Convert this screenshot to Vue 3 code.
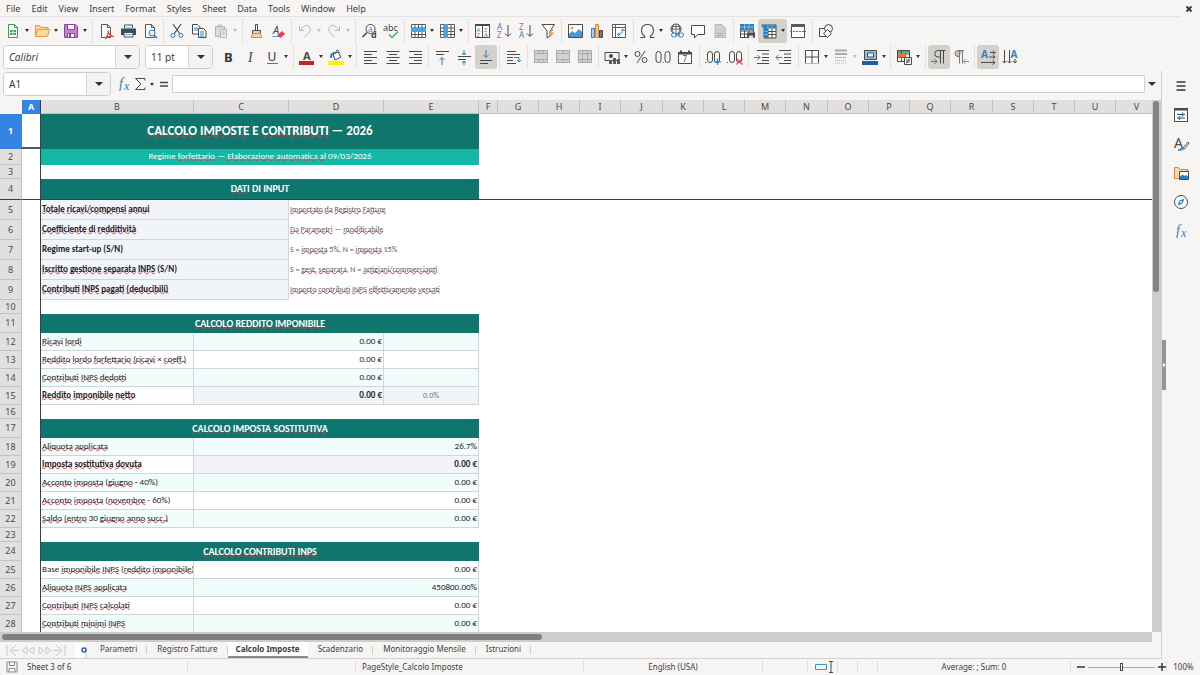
<script setup>
const menus = ['File', 'Edit', 'View', 'Insert', 'Format', 'Styles', 'Sheet', 'Data', 'Tools', 'Window', 'Help']

const page = (c) => `<path d="M3.5 1.5h6l3 3v10h-9z" fill="#fdfdfd" stroke="${c}"/><path d="M9.5 1.5v3h3" fill="none" stroke="${c}"/>`
const grid = '<path d="M1.5 1.5h14v13h-14zM1.5 5h14M1.5 8.5h14M1.5 11.5h14M5 1.5v13M8.500 1.5v13M12 1.500v13" fill="#fff" stroke="#4a4a48" stroke-width=".9"/>'
const tinyGrid = (extra) => `<path d="M1.500 1.500h13v12h-13z" fill="#d4d3d1" stroke="#aaa9a7"/><path d="${extra}" fill="none" stroke="#aaa9a7"/>`
const lines = (d) => `<path d="${d}" stroke="#4a4a48" fill="none"/>`
const letter = (t, x, y, size, fill, more = '') => `<text x="${x}" y="${y}" font-size="${size}" fill="${fill}" ${more}>${t}</text>`
const blue = '#2583c6'

const icons = {
  new: page('#3b9a55') + '<path d="M5 7h6v5H5z" fill="#3fa65b"/><path d="M5 9.500h6M8 7v5" stroke="#c9ecd1"/>',
  open: '<path d="M1.500 13.500v-11h4l1.500 2h7v3" fill="#fbd596" stroke="#e8963f"/><path d="M1.500 13.500l2-7h12l-2 7z" fill="#fcd99c" stroke="#e8963f"/>',
  save: '<path d="M1.500 1.500h11l2 2v11h-13z" fill="#c77fd4" stroke="#8e44a3"/><path d="M4.500 1.500h7v5h-7z" fill="#fff" stroke="#8e44a3"/><path d="M4.500 10.500h7v4h-7z" fill="#fff" stroke="#8e44a3"/><path d="M6 11h2v3H6z" fill="#8e44a3"/>',
  pdf: page('#5b5b59') + '<path d="M7 15.500c3-3 4-5 3-8 0 3 3 6 6 6-3-1-6 0-9 2" fill="none" stroke="#d43b3f" stroke-width="1.200"/>',
  print: '<path d="M4.500 6V2h8v4" fill="#fff" stroke="#4a4a48"/><path d="M1 5.500h15v6.500H1z" fill="#4a4a48"/><path d="M4 4.500h9v1.500H4z" fill="#5aa5dc"/><path d="M4 9.500h9v4.500H4z" fill="#fff" stroke="#4a4a48"/><path d="M5 11.500h7" stroke="#5aa5dc"/>',
  preview: page('#5b5b59') + '<circle cx="10" cy="10" r="3" fill="#e2f1fb" stroke="#2583c6"/><path d="M12 12l3 3" stroke="#2583c6" stroke-width="1.500"/>',
  cut: '<path d="M4 1l7 10M12 1L5 11" stroke="#4a4a48" stroke-width="1.200"/><circle cx="4" cy="12.500" r="2" fill="none" stroke="#2583c6"/><circle cx="12" cy="12.500" r="2" fill="none" stroke="#2583c6"/>',
  copy: '<path d="M1.500 1.500h5l2.500 2.500v7h-7.500z" fill="#fff" stroke="#4a4a48"/><path d="M3 5h4M3 7h4" stroke="#2583c6"/><path d="M7.500 5.500h5l2.500 2.500v6.500h-7.500z" fill="#fff" stroke="#4a4a48"/><path d="M9 9h4M9 11h4M9 13h4" stroke="#2583c6"/>',
  paste: '<path d="M2.500 3.500h9v10h-9z" fill="#dddcda" stroke="#b6b5b3"/><path d="M5 1.500h4v3H5z" fill="#c4c3c1"/><path d="M7.500 6.500h6v8h-6z" fill="#ecebe9" stroke="#b6b5b3"/><path d="M9 9h3M9 11h3" stroke="#b6b5b3"/>',
  brush: '<path d="M7.500 1.500h2v6h-2z" fill="#fff" stroke="#4a4a48"/><path d="M4.500 7.500h8v3h-8z" fill="#d5d4d2" stroke="#4a4a48"/><path d="M4.500 10.500h8l1 4h-10z" fill="#fbd596" stroke="#e8862f"/>',
  clear: letter('A', 3, 11, 11, '#4a4a48', 'font-style="italic"') + '<path d="M2 13.500h7" stroke="#5aa5dc"/><path d="M7 12.500l5-4.500 3 3-4.500 4z" fill="#e2444b"/>',
  undo: '<path d="M2.500 7.500L6 4a3.900 3.900 0 0 1 6.500 5L7.500 14M2.500 3v4.500H7" fill="none" stroke="#bcbbb9"/>',
  redo: '<path d="M13.500 7.500L10 4a3.900 3.900 0 0 0-6.500 5l5 5M13.500 3v4.500H9" fill="none" stroke="#bcbbb9"/>',
  find: '<circle cx="9.500" cy="6" r="4.500" fill="#fff" stroke="#4a4a48"/><path d="M6 9.500L1.500 14" stroke="#4a4a48" stroke-width="1.600"/>' + letter('a', 7, 8.5, 8, blue) + letter('d', 10, 15, 9, '#4a4a48', 'font-weight="bold"'),
  spell: letter('abc', 0, 8, 9, '#4a4a48') + '<path d="M6 11.500l3 3 6-6" fill="none" stroke="#3eb96b" stroke-width="1.500"/>',
  row: grid + '<path d="M1 5h15v4H1z" fill="#4aa3e0"/>',
  col: grid + '<path d="M5 1h4v14H5z" fill="#4aa3e0"/>',
  sort: '<path d="M1.500 1.500h14v13h-14zM8.500 1.500v13" fill="#fff" stroke="#4a4a48"/><path d="M1 1h15v2H1z" fill="#4a4a48"/>' + letter('A', 2.5, 8.500, 6, blue) + letter('Z', 2.5, 14, 6, '#b455c0') + letter('Z', 10, 8.500, 6, '#b455c0') + letter('A', 10, 14, 6, blue),
  az: letter('A', 1, 7, 8, blue) + letter('Z', 1, 15, 8, '#b455c0') + lines('M12 2v11M9 10.500l3 3 3-3'),
  za: letter('Z', 1, 7, 8, '#b455c0') + letter('A', 1, 15, 8, blue) + lines('M12 2v11M9 10.500l3 3 3-3'),
  filter: '<path d="M2 1.500h12.500L10 8v5l-3 2V8z" fill="#fff" stroke="#4a4a48"/><path d="M12 6l-4 5h3l-1.500 4L14.500 9.500h-3L14 6z" fill="#f5a34b"/>',
  image: '<path d="M1.500 1.500h14v13h-14z" fill="#fff" stroke="#4a4a48"/><path d="M2 14v-3l3-3 3 2 4-4 3 3v5z" fill="#4a98d3"/><circle cx="5" cy="5" r="1.500" fill="#f2a040"/>',
  chart: '<path d="M2.500 5.500h3v9h-3z" fill="#a7d0f0" stroke="#2583c6"/><path d="M6.500 1.500h3v13h-3z" fill="#fbc277" stroke="#e8862f"/><path d="M10.500 7.500h3v7h-3z" fill="#77767b" stroke="#4a4a48"/>',
  pivot: '<path d="M1.500 1.500h13v13h-13zM1.500 4.500h13M4.500 1.500v13" fill="#fff" stroke="#5b5b59"/><path d="M6.500 11.500c4 0 5.500-2 5.500-5.500M10 8l2-2 2 2M8.500 9.500l-2 2 2 2" fill="none" stroke="#2583c6"/>',
  omega: '<path d="M1.500 14.500h4v-1.500C1 10 1.500 1.500 8.500 1.500s7.500 8.500 3 11.500v1.500h4" fill="none" stroke="#4a4a48" stroke-width="1.100"/>',
  link: '<circle cx="8" cy="6" r="5" fill="#fff" stroke="#4a4a48"/><path d="M3 6h10M8 1v10M4 3.500h8M5.500 2c-1.500 3-1.500 5 0 8M10.500 2c1.500 3 1.500 5 0 8" fill="none" stroke="#4a4a48" stroke-width=".8"/><rect x="3.500" y="10" width="5" height="4" rx="2" fill="#f6f5f4" stroke="#2583c6"/><rect x="10.500" y="10" width="5" height="4" rx="2" fill="#f6f5f4" stroke="#2583c6"/><path d="M7 12h5" stroke="#2583c6"/>',
  comment: '<path d="M1.500 2.500h13v9h-7l-3 3.500v-3.500h-3z" fill="#fff" stroke="#4a4a48"/>',
  header: '<path d="M3 1.500h7l3.500 3.500v9.500H3z" fill="#cfcecc" stroke="#bab9b7"/><path d="M5 10.500h6M5 12.500h6" stroke="#b0afad"/>',
  area: '<path d="M1.500 1.500h13v13h-13zM1.500 8h13M1.500 11h13M5.500 1.500v13M10 1.500v13" fill="#fff" stroke="#4a4a48"/><path d="M1 1h14v6H1z" fill="#2583c6"/><path d="M1 4h14M5.500 1v6M10 1v6" stroke="#9bc9ea" stroke-width=".8"/><path d="M8 9.500h8v5H8z" fill="#4a4a48"/><path d="M10 12.500h4v3h-4z" fill="#cfe6f6"/>',
  freeze: '<path d="M3 2h12v13H3zM3 8.500h12M3 11.500h12M7 2v13M11 2v13" fill="#fff" stroke="#4a4a48"/><path d="M3 2h12v3.500H7V15H3z" fill="#2583c6"/><path d="M3 8.500h4M3 11.500h4M7 2v4M11 2v3.500" stroke="#9bc9ea" stroke-width=".7"/><path d="M0 3h4M2 1v4M1 1l3 3" stroke="#2583c6"/>',
  split: '<path d="M1.500 1.500h13v13h-13z" fill="#fff" stroke="#4a4a48"/><path d="M1 1h14v3H1z" fill="#5b5b59"/><path d="M0 8.500h16" stroke="#2583c6" stroke-dasharray="2 1"/>',
  shapes: '<path d="M1.500 5.500h7v8h-7z" fill="none" stroke="#4a4a48"/><circle cx="10.500" cy="5.500" r="4" fill="#f6f5f4" stroke="#4a4a48"/><path d="M9.500 6.500l4 4-4 4-4-4z" fill="#f6f5f4" stroke="#4a4a48"/>',
  bold: letter('B', 4, 13, 13, '#363634', 'font-weight="bold"'),
  italic: letter('I', 6, 13, 14, '#4a4a48', 'font-style="italic" font-family="Liberation Serif"'),
  underline: letter('U', 3.5, 11.5, 12, '#363634') + '<path d="M3 14.500h11" stroke="#2583c6"/>',
  fontcolor: letter('A', 4, 10.500, 11, '#4a4a48', 'font-weight="bold"') + '<path d="M0 12h15v4H0z" fill="#c9211e"/>',
  highlight: '<path d="M5 5l5-2 3 5-6 3z" fill="#fff" stroke="#4a4a48"/><path d="M8 4c0-4 3-4 3 0" fill="none" stroke="#4a4a48"/><path d="M3 9c0-4 1-5 5-5" fill="none" stroke="#2583c6" stroke-width="2"/><path d="M0 12h16v4H0z" fill="#fff200"/>',
  left: lines('M2 2.500h13M2 5.500h8M2 8.500h13M2 11.500h8M2 14.500h13'),
  center: lines('M2.500 2.500h13M5 5.500h8M2.500 8.500h13M5 11.500h8M2.500 14.500h13'),
  right: lines('M3 2.500h13M8 5.500h8M3 8.500h13M8 11.500h8M3 14.500h13'),
  top: lines('M2 2.500h13M2 5.500h8') + '<path d="M8 16V8.500M5.500 11L8 8.500l2.500 2.500" fill="none" stroke="#2583c6"/>',
  middle: lines('M2 7.500h13M2 10.500h8') + '<path d="M8 1v5M6 4l2 2 2-2M8 16v-4M6 14l2-2 2 2" fill="none" stroke="#2583c6"/>',
  bottom: lines('M2 11.500h12M2 14.500h8') + '<path d="M8 1v7M5.500 6L8 8.500 10.500 6" fill="none" stroke="#2583c6"/>',
  wrap: lines('M2 2.500h9M2 5.500h13M2 8.500h6M2 11.500h6M2 14.500h9') + '<path d="M9 8.500h5v4M12 11l2 2 2-2" fill="none" stroke="#2583c6"/>',
  merge: tinyGrid('M1.500 4.500h13M1.500 10.500h13M6 1.500v3M10 1.500v3M6 10.500v3M10 10.500v3'),
  mergecells: tinyGrid('M1.500 4.500h13M1.500 10.500h13M8 1.500v3M8 10.500v3'),
  unmerge: tinyGrid('M1.500 4.500h13M1.500 10.500h13M5.500 1.500v12M10.500 1.500v12'),
  currency: '<path d="M1 3.500h14v8H1z" fill="#f6f5f4" stroke="#4a4a48"/><circle cx="7" cy="7" r="2" fill="#4a4a48"/><path d="M5 11h3v4H5zM9 9h3v6H9zM13 10h3v5h-3z" fill="#5b5b59"/>',
  percent: '<circle cx="4.500" cy="5" r="2.500" fill="none" stroke="#4a4a48"/><circle cx="11.500" cy="11" r="2.500" fill="none" stroke="#4a4a48"/><path d="M12 2L4 14" stroke="#4a4a48"/>',
  number: '<rect x="1" y="2.500" width="5" height="11" rx="2.500" fill="none" stroke="#4a4a48"/><rect x="10" y="2.500" width="5" height="11" rx="2.500" fill="none" stroke="#4a4a48"/><path d="M7.500 13.500h1" stroke="#4a4a48"/>',
  date: '<path d="M1.500 3.500h13v11h-13z" fill="#fff" stroke="#4a4a48"/><path d="M1 3h14v2.500H1zM3 1.500h2V4H3zM11 1.500h2V4h-2z" fill="#4a4a48"/>' + letter('7', 5.5, 13, 8, '#4a4a48'),
  adddec: '<path d="M0 13.500h1" stroke="#4a4a48"/><rect x="2.500" y="2.500" width="5" height="11" rx="2.500" fill="none" stroke="#4a4a48"/><rect x="9.500" y="2.500" width="5" height="11" rx="2.500" fill="none" stroke="#4a4a48"/><path d="M9 13h7M12.500 9.500v6.500" stroke="#2583c6" stroke-width="1.200"/>',
  deldec: '<path d="M0 13.500h1" stroke="#4a4a48"/><rect x="2.500" y="2.500" width="5" height="11" rx="2.500" fill="none" stroke="#4a4a48"/><rect x="9.500" y="2.500" width="5" height="11" rx="2.500" fill="none" stroke="#4a4a48"/><path d="M9.500 9.500l6 6M15.500 9.500l-6 6" stroke="#e2444b" stroke-width="1.200"/>',
  indent: lines('M3 1.500h12M8 5h7M8 8.500h7M8 11.500h7M3 14.500h12') + '<path d="M0 8.500h6M3.500 6L6 8.500 3.500 11" fill="none" stroke="#2583c6"/>',
  outdent: lines('M3 1.500h12M8 5h7M8 8.500h7M8 11.500h7M3 14.500h12') + '<path d="M0 8.500h6M2.500 6L0 8.500 2.500 11" fill="none" stroke="#2583c6"/>',
  borders: '<path d="M1.500 1.500h13v13h-13zM8 1.500v13M1.500 8h13" fill="#fff" stroke="#4a4a48"/><path d="M1 14.500h14" stroke="#e8b04a"/>',
  linestyle: '<path d="M2 1.500h12M2 5h12" stroke="#aaa9a7" stroke-width="2"/><path d="M2 8.500h12" stroke="#aaa9a7" stroke-dasharray="3 1"/><path d="M2 11.500h12M2 14h12" stroke="#aaa9a7" stroke-dasharray="1 1"/>',
  bordercolor: '<path d="M2.500 1.500h12v9h-12z" fill="#8cc1ec" stroke="#4a4a48"/><path d="M5.500 4h6v4h-6z" fill="#f6f5f4" stroke="#4a4a48"/><path d="M0 12h16v4H0z" fill="#1f5fa0"/>',
  conditional: '<path d="M1.500 1.500h12v11h-12zM1.500 5h12M1.500 8.500h12M5.500 1.500v11M9.500 1.500v11" fill="#fff" stroke="#4a4a48"/><path d="M2 2h3v3H2zM6 2h7v2H6z" fill="#57b36d"/><path d="M2 5h8v3.500H2z" fill="#ee6c4d"/><path d="M8.500 8.500h7v7h-7z" fill="#fff" stroke="#4a4a48"/><path d="M10 11h4M10 13h4M13.500 9.500l-3 5" stroke="#4a4a48" stroke-width=".9"/>',
  ltr: '<path d="M14.500 1.500H7a3 3 0 0 0 0 6.500h2M9.500 1.500v13M12.500 1.500v13" fill="none" stroke="#4a4a48"/><path d="M0 12.500h6M3.500 10L6 12.500 3.500 15" fill="none" stroke="#2583c6"/>',
  rtl: '<path d="M11 1.500H5a3 3 0 0 0 0 6h1" fill="#c4c3c1" stroke="#777"/><path d="M6.500 1.500v13M9.500 1.500v13" fill="none" stroke="#777"/><path d="M10 12.500h6M12.500 10L10 12.500l2.500 2.500" fill="none" stroke="#5aa5dc"/>',
  horiz: letter('A', 1, 9, 10, blue, 'font-weight="bold"') + lines('M10 3.500h5M13 1.500l2 2-2 2M9 8h6M13 6l2 2-2 2M1 13.500h14M12.500 11.500l2.500 2-2.500 2'),
  vert: letter('A', 8.5, 9, 10, blue, 'font-weight="bold"') + lines('M2.500 1v13M.5 12l2 2 2-2M7.500 1v13M5.500 12l2 2 2-2M13 10v4M11 12l2 2 2-2'),
  fx: letter('f', 3, 12, 14, blue, 'font-style="italic" font-family="Liberation Serif"') + letter('x', 8, 14, 12, blue, 'font-style="italic" font-family="Liberation Serif"'),
  sigma: '<path d="M13 4.500V2.500H3.500L9 8l-5.500 5.500H13v-2" fill="none" stroke="#4a4a48"/>',
  equals: '<path d="M4 6.500h8M4 10h8" stroke="#4a4a48" stroke-width="1.400"/>',
  burger: '<path d="M3.500 4h9M3.500 8h9M3.500 12h9" stroke="#363634" stroke-width="1.500"/>',
  props: '<path d="M1.500 1.500h13v13h-13z" fill="#fff" stroke="#4a4a48"/><path d="M1 1h14v2.500H1z" fill="#4a4a48"/><path d="M4 7.500h8M4 11h8" stroke="#4a4a48"/><path d="M9.500 5.500v4M6.500 9v4" stroke="#2583c6" stroke-width="1.500" fill="none"/>',
  styles: letter('A', 1, 12, 14, '#4a4a48') + '<path d="M15 6l-5 6 1.500 1L16 7z" fill="#fff" stroke="#4a4a48" stroke-width=".9"/><path d="M5 14c2 0 3-3 5-2.500S11 15 5 14" fill="#5aa5dc" stroke="#2583c6"/>',
  gallery: '<path d="M1.500 13.500v-11h4l1.500 2h8v9z" fill="#fbd9b0" stroke="#e8862f"/><path d="M6.500 6.500h9v8h-9z" fill="#fff" stroke="#4a4a48"/><path d="M7 14v-2.500l2.500-2 2 1.500 1.500-1 2 1.500V14z" fill="#2583c6"/>',
  navigator: '<circle cx="8" cy="8" r="6.500" fill="#fff" stroke="#4a4a48"/><path d="M11.500 4.500l-2 5-5 2 2-5z" fill="#2583c6"/><circle cx="8" cy="8" r="1" fill="#fff"/>',
}

const b = (icon, label, o = {}) => ({ icon, label, ...o })
const arrow = { arrow: true }
const dim = { arrow: true, dim: true }
const standardBar = [
  [b('new', 'New', arrow), b('open', 'Open', arrow), b('save', 'Save', arrow)],
  [b('pdf', 'Export as PDF'), b('print', 'Print'), b('preview', 'Print Preview')],
  [b('cut', 'Cut'), b('copy', 'Copy'), b('paste', 'Paste', dim)],
  [b('brush', 'Clone Formatting'), b('clear', 'Clear Formatting')],
  [b('undo', 'Undo', dim), b('redo', 'Redo', dim)],
  [b('find', 'Find and Replace'), b('spell', 'Spelling')],
  [b('row', 'Row', arrow), b('col', 'Column', arrow)],
  [b('sort', 'Sort'), b('az', 'Sort Ascending'), b('za', 'Sort Descending'), b('filter', 'AutoFilter')],
  [b('image', 'Image'), b('chart', 'Chart'), b('pivot', 'Pivot Table')],
  [b('omega', 'Symbol', arrow), b('link', 'Hyperlink'), b('comment', 'Comment'), b('header', 'Headers and Footers')],
  [b('area', 'Print Area'), b('freeze', 'Freeze Rows and Columns', { arrow: true, on: true }), b('split', 'Split Window')],
  [b('shapes', 'Draw Functions')],
]
const formatBar = [
  [b('bold', 'Bold'), b('italic', 'Italic'), b('underline', 'Underline', arrow)],
  [b('fontcolor', 'Font Color', arrow), b('highlight', 'Background Color', arrow)],
  [b('left', 'Align Left'), b('center', 'Center'), b('right', 'Align Right')],
  [b('top', 'Align Top'), b('middle', 'Center Vertically'), b('bottom', 'Align Bottom', { on: true })],
  [b('wrap', 'Wrap Text')],
  [b('merge', 'Merge and Center'), b('mergecells', 'Merge Cells'), b('unmerge', 'Unmerge Cells')],
  [b('currency', 'Currency', arrow), b('percent', 'Percent'), b('number', 'Number'), b('date', 'Date')],
  [b('adddec', 'Add Decimal Place'), b('deldec', 'Delete Decimal Place')],
  [b('indent', 'Increase Indent'), b('outdent', 'Decrease Indent')],
  [b('borders', 'Borders', arrow), b('linestyle', 'Border Style', dim), b('bordercolor', 'Border Color', arrow)],
  [b('conditional', 'Conditional Formatting', arrow)],
  [b('ltr', 'Left-To-Right', { on: true }), b('rtl', 'Right-To-Left')],
  [b('horiz', 'Text Direction Horizontal', { on: true }), b('vert', 'Text Direction Vertical')],
]
const sidebar = [b('burger', 'Sidebar Settings'), b('props', 'Properties'), b('styles', 'Styles'), b('gallery', 'Gallery'), b('navigator', 'Navigator'), b('fx', 'Functions')]

const columns = 'ABCDEFGHIJKLMNOPQRSTUV'.split('')
const colWidth = (name, i) => ({ A: 19, B: 153, C: 95, D: 95, E: 95, F: 19 })[name] ?? (i % 4 === 1 ? 42 : 41)

// Words between backticks carry the spelling mark.
const parts = (s) => s.split('`').map((text, i) => ({ text, bad: i % 2 === 1 })).filter((p) => p.text)
const gap = { kind: 'gap', cells: [] }
const title = (text, cls = 'section') => ({ kind: cls, cells: [{ text, span: 4, cls }] })
const input = (label, note) => ({ kind: 'input', cells: [{ text: label, span: 2, cls: 'label box soft strong' }, { text: note, span: 2, cls: 'note' }] })
const value = (label, val, tone = '', total = false) => ({
  kind: 'value',
  cells: [
    { text: label, span: 1, cls: `label box ${total ? 'strong' : tone}` },
    { text: val, span: 3, cls: `num box ${total ? 'soft strong' : tone}` },
  ],
})
const taxable = (label, tone, total = false) => ({
  kind: 'value',
  cells: [
    { text: label, span: 1, cls: `label box ${total ? 'strong' : tone}` },
    { text: '0.00 €', span: 2, cls: `num box ${total ? 'soft strong' : tone}` },
    { text: total ? '0.0%' : '', span: 1, cls: `pct box ${total ? 'soft' : tone}` },
  ],
})
const rows = [
  title('`CALCOLO` `IMPOSTE` E `CONTRIBUTI` — 2026', 'title'),
  title('Regime `forfettario` — `Elaborazione` `automatica` `al` 09/03/2026', 'subtitle'),
  gap,
  title('`DATI` DI INPUT'),
  input('`Totale` `ricavi/compensi` `annui`', '`Importato` `da` `Registro` `Fatture`'),
  input('`Coefficiente` `di` `redditività`', '`Da` `Parametri` — `modificabile`'),
  input('Regime start-up (S/N)', 'S = `imposta` 5%, N = `imposta` 15%'),
  input('`Iscritto` `gestione` `separata` `INPS` (S/N)', 'S = `gest.` `separata`, N = `artigiani/commercianti`'),
  input('`Contributi` `INPS` `pagati` `(deducibili)`', '`Importo` `contributi` `INPS` `effettivamente` `versati`'),
  gap,
  title('`CALCOLO` `REDDITO` `IMPONIBILE`'),
  taxable('`Ricavi` `lordi`', 'tint'),
  taxable('`Reddito` `lordo` `forfettario` `(ricavi` × `coeff.)`', ''),
  taxable('`Contributi` `INPS` `dedotti`', 'tint'),
  taxable('`Reddito` `imponibile` `netto`', '', true),
  gap,
  title('`CALCOLO` `IMPOSTA` `SOSTITUTIVA`'),
  value('`Aliquota` `applicata`', '26.7%', 'tint'),
  value('`Imposta` `sostitutiva` `dovuta`', '0.00 €', '', true),
  value('`Acconto` `imposta` (`giugno` - 40%)', '0.00 €', 'tint'),
  value('`Acconto` `imposta` (`novembre` - 60%)', '0.00 €'),
  value('`Saldo` `(entro` 30 `giugno` `anno` `succ.)`', '0.00 €', 'tint'),
  gap,
  title('`CALCOLO` `CONTRIBUTI` `INPS`'),
  value('Base `imponibile` `INPS` (`reddito` `imponibile)`', '0.00 €'),
  value('`Aliquota` `INPS` `applicata`', '450800.00%', 'tint'),
  value('`Contributi` `INPS` `calcolati`', '0.00 €'),
  value('`Contributi` `minimi` `INPS`', '0.00 €', 'tint'),
].map((r, i) => ({ ...r, n: i + 1 }))

const tabs = ['Parametri', 'Registro Fatture', 'Calcolo Imposte', 'Scadenzario', 'Monitoraggio Mensile', 'Istruzioni']
</script>

<template>
  <div class="app">
    <nav class="menubar">
      <div class="menus"><button v-for="m in menus" :key="m">{{ m }}</button></div>
      <button class="close" aria-label="Close document"><svg viewBox="0 0 8 8"><path d="M1.500 1.500l5 5M6.500 1.500l-5 5" stroke="#2e3436" stroke-width="1.800" /></svg></button>
    </nav>

    <div class="toolbar">
      <div v-for="(g, gi) in standardBar" :key="gi" class="group">
        <button v-for="t in g" :key="t.icon" :class="{ on: t.on, dim: t.dim }" :aria-label="t.label">
          <svg class="icon" viewBox="0 0 16 16" v-html="icons[t.icon]" />
          <i v-if="t.arrow" class="caret" />
        </button>
      </div>
    </div>

    <div class="toolbar format">
      <div class="combo font"><input value="Calibri" aria-label="Font Name"><button aria-label="Show fonts"><i class="caret big" /></button></div>
      <div class="combo size"><input value="11 pt" aria-label="Font Size"><button aria-label="Show sizes"><i class="caret big" /></button></div>
      <div v-for="(g, gi) in formatBar" :key="gi" class="group">
        <button v-for="t in g" :key="t.icon" :class="{ on: t.on, dim: t.dim }" :aria-label="t.label">
          <svg class="icon" viewBox="0 0 16 16" v-html="icons[t.icon]" />
          <i v-if="t.arrow" class="caret" />
        </button>
      </div>
    </div>

    <div class="work">
      <main class="document">
        <div class="formula">
          <div class="combo name"><input value="A1" aria-label="Name Box"><button aria-label="Show names"><i class="caret big" /></button></div>
          <div class="functions">
            <button aria-label="Function Wizard"><svg class="icon" viewBox="0 0 16 16" v-html="icons.fx" /></button>
            <button aria-label="Select Function"><svg class="icon" viewBox="0 0 16 16" v-html="icons.sigma" /><i class="caret" /></button>
            <button aria-label="Formula"><svg class="icon" viewBox="0 0 16 16" v-html="icons.equals" /></button>
          </div>
          <input class="line" aria-label="Input line">
          <button class="expand" aria-label="Expand Formula Bar"><i class="caret big" /></button>
        </div>

        <div class="sheet">
          <div class="cells">
            <table>
              <colgroup>
                <col class="numbers">
                <col v-for="(c, i) in columns" :key="c" :style="{ width: colWidth(c, i) + 'px' }">
              </colgroup>
              <thead>
                <tr><td class="corner" /><th v-for="c in columns" :key="c" scope="col" :class="{ picked: c === 'A', edge: c === 'A' }">{{ c }}</th></tr>
              </thead>
              <tbody>
                <tr v-for="r in rows" :key="r.n" :class="[r.kind + '-row', { frozen: r.n === 4 }]">
                  <th scope="row" :class="{ picked: r.n === 1 }">{{ r.n }}</th>
                  <td class="edge" :class="{ cursor: r.n === 1 }" />
                  <td v-for="(c, ci) in r.cells" :key="ci" :colspan="c.span" :class="c.cls">
                    <span v-for="(p, pi) in parts(c.text)" :key="pi" :class="{ bad: p.bad }">{{ p.text }}</span>
                  </td>
                  <td :colspan="r.cells.length ? 17 : 21" />
                </tr>
              </tbody>
            </table>
          </div>
          <div class="vscroll"><div class="thumb" /></div>
        </div>
        <div class="hscroll"><div class="thumb" /></div>

        <div class="tabs">
          <svg class="tabnav" viewBox="0 0 60 12" fill="none" stroke="#c9c8c6"><path d="M1 1v11M10 1L4 6.500l6 5.500M6 6.500h7M21 3l-5 3.500 5 3.500zM28 3l-5 3.500 5 3.500zM33 3l5 3.500-5 3.500zM40 3l5 3.500-5 3.500zM50 1l6 5.500-6 5.500M47 6.500h7M59 1v11" /></svg>
          <button class="add" aria-label="Add Sheet"><svg viewBox="0 0 16 16"><path d="M1 1h8l3 3v12H1z" fill="#fff" /><path d="M12 5v13" stroke="#c9c8c6" /><circle cx="10" cy="8" r="2" fill="#fff" stroke="#2a62b8" stroke-width="1.500" /></svg></button>
          <button v-for="t in tabs" :key="t" class="tab" :class="{ active: t === 'Calcolo Imposte' }">{{ t }}</button>
        </div>
      </main>

      <div class="splitter"><button aria-label="Hide sidebar"><i /></button></div>
      <aside class="sidebar">
        <button v-for="s in sidebar" :key="s.icon" :aria-label="s.label"><svg class="icon" viewBox="0 0 16 16" v-html="icons[s.icon]" /></button>
      </aside>
    </div>

    <footer class="status">
      <div class="count">
        <svg viewBox="0 0 12 12" fill="none" stroke="#8d8c8a"><path d="M1 1h10v10H1zM3.500 1v3.500h5V1M3 11V7.500h6V11" /></svg>
        <span>Sheet 3 of 6</span>
      </div>
      <div />
      <div class="style">PageStyle_Calcolo Imposte</div>
      <div class="middle">English (USA)</div>
      <div />
      <div class="mode"><svg viewBox="0 0 18 12" fill="none"><path d="M.5 3.500h11v5H.5z" stroke="#3a96cf" /><path d="M14 .5h4M16 .5v11M14 11.500h4" stroke="#4a4a48" /></svg></div>
      <div /><div />
      <div class="middle">Average: ; Sum: 0</div>
      <div class="zoom">
        <button aria-label="Zoom out"><svg viewBox="0 0 8 8"><path d="M0 4h8" stroke="#2e3436" stroke-width="1.500" /></svg></button>
        <input type="range" min="0" max="100" value="50" aria-label="Zoom">
        <button aria-label="Zoom in"><svg viewBox="0 0 8 8"><path d="M0 4h8M4 0v8" stroke="#2e3436" stroke-width="1.500" /></svg></button>
      </div>
      <div class="middle last">100%</div>
    </footer>
  </div>
</template>

<style>
body { margin: 0; }
</style>

<style scoped>
.app { display: flex; flex-direction: column; height: 100vh; background: #f6f5f4; color: #3d3d3b; font: 9px/12px "Noto Sans", "Open Sans", sans-serif; overflow: hidden; }
.app * { box-sizing: border-box; }
button { display: flex; align-items: center; justify-content: center; margin: 0; padding: 0; border: 0; background: none; color: inherit; font: inherit; }
input { min-width: 0; margin: 0; font: inherit; color: inherit; }
.icon { flex: none; width: 16px; height: 16px; overflow: visible; font-family: "Noto Sans", sans-serif; }
.caret { flex: none; width: 0; border: 2px solid transparent; border-top: 3px solid #2e3436; border-bottom: 0; }
.caret.big { border-width: 4px 4px 0; }
.dim .caret { border-top-color: #bcbbb9; }

.menubar { display: flex; justify-content: space-between; align-items: center; flex: none; height: 17px; }
.menus { display: flex; flex: 1; height: 17px; padding: 1px 0 0 6px; gap: 11px; border-bottom: 1px solid #e4e3e1; }
.close { width: 16px; margin-right: 3px; }
.close svg { width: 8px; height: 8px; }

.toolbar { display: flex; align-items: center; flex: none; height: 27px; padding-left: 2px; }
.toolbar.format { padding: 0 0 2px 3px; }
.group { display: flex; }
.group:not(:last-child) { margin-right: 2px; padding-right: 3px; border-right: 1px solid #e2e1df; }
.group:nth-child(even):not(:last-child) { padding-right: 2px; }
.group button { height: 24px; padding: 0 3px; border-radius: 3px; }
.group .caret { margin-right: -1px; margin-left: 4px; }
.group button.on { background: #d4d1cd; }

.combo { display: flex; flex: none; height: 24px; border: 1px solid #cfcdca; border-radius: 4px; background: #fff; overflow: hidden; font-size: 10px; }
.combo input { flex: 1; padding: 0 5px; border: 0; background: #fff; }
.combo button { width: 24px; border-left: 1px solid #d9d7d4; background: #f4f3f1; }
.font { width: 137px; margin-right: 5px; font-style: italic; }
.size { width: 68px; margin-right: 4px; }
.name { width: 108px; }

.work { display: flex; flex: 1; min-height: 0; }
.document { display: flex; flex-direction: column; flex: 1; min-width: 0; }
.formula { display: flex; align-items: center; flex: none; height: 29px; padding: 0 3px 3px; }
.functions { display: flex; margin-left: 5px; }
.functions .caret { margin: 0 2px; }
.line { flex: 1; height: 18px; border: 1px solid #d4d2cf; background: #fff; }
.expand { width: 13px; }

.sheet { display: flex; flex: 1; min-height: 0; background: #fff; }
.cells { flex: 1; min-width: 0; overflow: hidden; }
table { width: 1158px; table-layout: fixed; border-collapse: separate; border-spacing: 0; font: 9px/12px Carlito, Lato, sans-serif; }
.numbers { width: 22px; }
th, td { height: 18px; padding: 0; overflow: hidden; white-space: nowrap; }
th { border-right: 1px solid #c3c2c0; border-bottom: 1px solid #c3c2c0; background: #e1e0de; color: #4a4a48; font: 9px/12px "Noto Sans", sans-serif; }
thead th, .corner { height: 14px; }
.corner { background: #f6f5f4; }
.picked { border-color: #3584e4; background: #3584e4; color: #fff; font-weight: 700; }
.edge { border-right: 1px solid #3d3d44; }
.cursor { border-bottom: 2px solid #4c5a5a; }
.title-row > * { height: 35px; }
.subtitle-row > * { height: 16px; }
.gap-row > * { height: 14px; }
.section-row > * { height: 19px; }
.input-row > * { height: 20px; }
.frozen > * { height: 21px; border-bottom: 1px solid #3d3d44; }
.title, .subtitle, .section { color: #fff; text-align: center; }
.title, .section { background: #0f766e; font-weight: 700; }
.title { padding-bottom: 2px; font-size: 13px; line-height: 16px; }
.section { font-size: 10px; }
.subtitle { padding-bottom: 2px; background: #14b8a6; }
.label, .num, .note, .pct { padding-bottom: 2px; }
.label, .note { padding-left: 1px; }
.note { color: #5b6068; font-size: 8px; }
.num { padding-right: 1px; text-align: right; }
.pct { color: #6b7280; font-size: 8px; text-align: center; }
.box { border-right: 1px solid #d1d5db; border-bottom: 1px solid #d1d5db; }
.label, .num { color: #1f2328; }
.tint { background: #f0fdfa; }
.soft { background: #f1f5f9; }
.strong { font-weight: 700; }
td span { white-space: pre; }
.bad { text-decoration: underline wavy #d93a3a 1px; text-decoration-skip-ink: none; text-underline-offset: -2px; }

.vscroll { flex: none; width: 9px; padding: 1px; background: #cdcdcc; }
.vscroll .thumb { width: 6px; height: 36%; border-radius: 3px; background: #838482; }
.hscroll { flex: none; height: 10px; margin-right: 9px; padding: 2px; background: #cdcdcc; }
.hscroll .thumb { width: 47%; height: 6px; border-radius: 3px; background: #7f807e; }

.tabs { display: flex; align-items: stretch; flex: none; height: 17px; border-bottom: 1px solid #d4d2cf; font-size: 8px; }
.tabnav { width: 60px; height: 12px; margin: 2px 8px 0 6px; }
.add { width: 16px; }
.add svg { width: 16px; height: 16px; }
.tab { padding: 0 10px; border-bottom: 2px solid transparent; position: relative; }
.tab:not(.active)::after { content: ""; position: absolute; right: 0; top: 4px; height: 8px; border-right: 1px solid #cfcdca; }
.tab.active { padding: 0 8px; border-color: #8b8c8a; background: #fff; font-weight: 700; }

.splitter { display: flex; align-items: center; flex: none; width: 5px; border-left: 1px solid #d0cecb; }
.splitter button { width: 4px; height: 50px; background: #959595; }
.splitter i { border: 2px solid transparent; border-left: 3px solid #fff; border-right: 0; }
.sidebar { display: flex; flex-direction: column; gap: 13px; flex: none; width: 34px; padding-top: 7px; align-items: center; }
.sidebar button { padding-right: 4px; }

.status { display: grid; grid-template-columns: 188fr 168fr 228fr 179fr 45fr 30fr 20fr 20fr 193fr 96fr 33fr; align-items: center; flex: none; height: 16px; font-size: 8px; }
.status > div { display: flex; align-items: center; min-width: 0; height: 12px; border-right: 1px solid #e0dfdd; white-space: nowrap; }
.count { gap: 9px; padding-left: 6px; }
.count svg { width: 12px; height: 12px; }
.style { padding-left: 6px; }
.status > .middle { justify-content: center; }
.status > .last { border: 0; }
.mode { padding-left: 7px; }
.mode svg { width: 18px; height: 12px; }
.zoom { gap: 3px; padding-left: 6px; }
.zoom button { flex: none; width: 8px; height: 12px; }
.zoom svg { width: 8px; height: 8px; }
.zoom input { flex: 1; appearance: none; height: 8px; background: linear-gradient(#a9a8a6, #a9a8a6) center / 100% 1px no-repeat; }
.zoom input::-webkit-slider-thumb { appearance: none; width: 3px; height: 8px; border: 1px solid #4a4a48; background: #fff; }
</style>
